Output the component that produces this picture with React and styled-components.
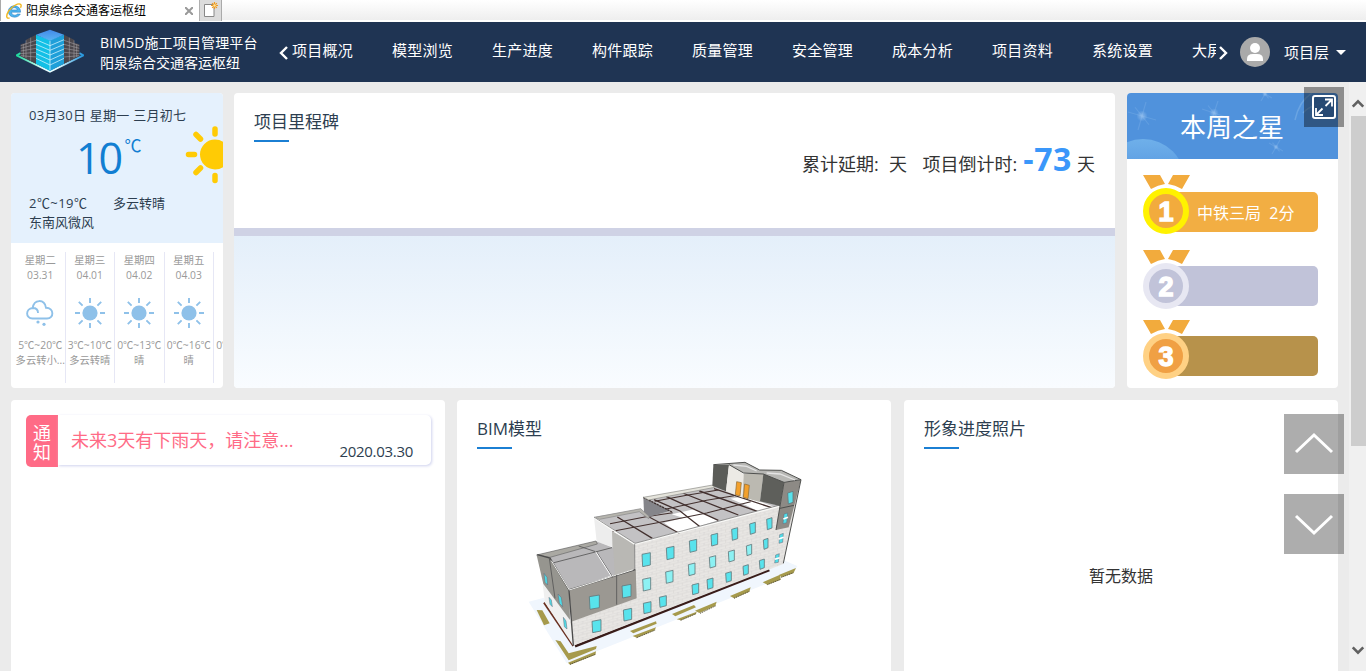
import React from 'react';
import styled, { createGlobalStyle } from 'styled-components';

const GlobalStyle = createGlobalStyle`
  * { box-sizing: border-box; }
  body {
    margin: 0;
    overflow: hidden;
    background: #ebebeb;
    color: #2d3e50;
    font-family: "Open Sans", "Noto Sans CJK SC", sans-serif;
  }
  svg { display: block; flex: none; }
`;

const Page = styled.div`
  width: 1366px;
  height: 671px;
  display: flex;
  flex-direction: column;
  overflow: hidden;
`;

/* Browser tab strip */
const TabStrip = styled.div`
  height: 22px;
  display: flex;
  flex: none;
  background: linear-gradient(#fff, #eee 92%, #fff 93%);
`;
const BrowserTab = styled.div`
  width: 200px;
  height: 21px;
  padding: 0 6px 0 5px;
  display: flex;
  align-items: center;
  background: #fff;
  border-left: 1px solid #aaa;
  border-right: 1px solid #b0b0b0;
  color: #000;
  font-size: 12px;
  line-height: 20px;
`;
const TabTitle = styled.span`
  flex: 1;
  margin-left: 4px;
  white-space: nowrap;
`;
const NewTab = styled.div`
  width: 22px;
  height: 21px;
  background: #dcdcdc;
  border-right: 1px solid #aaa;
`;

/* Header */
const Header = styled.header`
  height: 60px;
  flex: none;
  display: flex;
  align-items: center;
  background: #1f3453;
  color: #fff;
`;
const HeaderLogo = styled.div`
  width: 68px;
  margin-left: 16px;
`;
const Brand = styled.div`
  width: 178px;
  margin-left: 16px;
  font-size: 14px;
  line-height: 20px;
  white-space: nowrap;
  padding-top: 1px;
`;
const BrandName = styled.div`
  letter-spacing: 0.15px;
`;
const NavArrow = styled.div`
  width: 12px;
  margin-left: ${p => p.$gap || 0}px;
  display: flex;
  justify-content: center;
  padding-top: 1px;
`;
const Nav = styled.nav`
  width: 924px;
  height: 60px;
  margin-left: 2px;
  display: flex;
  gap: 39px;
  overflow: hidden;
  font-size: 15px;
  line-height: 57px;
  letter-spacing: 0.25px;
  white-space: nowrap;
`;
const NavItem = styled.a`
  flex: none;
  width: 61px;
`;
const UserMenu = styled.div`
  display: flex;
  align-items: center;
  margin-left: 11px;
  font-size: 15px;
  line-height: 20px;
`;
const UserLabel = styled.span`
  margin: 0 7px 0 14px;
`;

/* Page body */
const Body = styled.div`
  position: relative;
  flex: 1;
  min-height: 0;
  display: flex;
`;
const Board = styled.main`
  flex: 1;
  display: flex;
  flex-direction: column;
  gap: 12px;
  padding: 11px 11px 0;
`;
const TopRow = styled.div`
  height: 295px;
  flex: none;
  display: grid;
  grid-template-columns: 223px 893px 211px;
`;
const BottomRow = styled.div`
  flex: 1;
  display: grid;
  grid-template-columns: 446px 447px 434px;
`;
const Card = styled.section`
  overflow: hidden;
  margin-right: ${p => p.$gap || 0}px;
  background: #fff;
  border-radius: ${p => (p.$open ? '4px 4px 0 0' : '4px')};
  padding: ${p => p.$pad || '0'};
`;
const CardTitle = styled.h2`
  width: max-content;
  margin: 0;
  font-size: 17px;
  line-height: 24px;
  font-weight: 400;
  &::after {
    content: '';
    display: block;
    width: 35px;
    height: 2px;
    margin-top: 6px;
    background: #1b7fd3;
  }
`;

/* Weather */
const Today = styled.div`
  height: 150px;
  padding: 13px 0 0 18px;
  background: #e5f1fd;
  font-size: 13px;
  line-height: 19px;
  white-space: nowrap;
`;
const TodayDate = styled.div`
  letter-spacing: 0.25px;
`;
const TempRow = styled.div`
  display: flex;
  height: 69px;
  color: #117ed2;
`;
const Temp = styled.span`
  width: 47px;
  margin-left: 47px;
  padding-top: 2px;
  font-size: 43px;
  line-height: 62px;
  letter-spacing: -2px;
`;
const Degree = styled.span`
  width: 63px;
  padding: 11px 0 0 2px;
  font-size: 17px;
  line-height: 20px;
`;
const TodayRange = styled.div`
  display: flex;
`;
const RangeText = styled.span`
  width: 84px;
  letter-spacing: 0.45px;
`;
const Forecast = styled.div`
  height: 145px;
  display: flex;
  padding: 9px 0 5px 5px;
  overflow: hidden;
`;
const Day = styled.div`
  width: 49.5px;
  flex: none;
  display: flex;
  flex-direction: column;
  align-items: center;
  padding-top: 1px;
  border-right: 1px solid #e6e7f5;
  color: #999;
  font-size: 10.3px;
  line-height: 15px;
  white-space: nowrap;
  svg { margin: 14px 0 9px; }
`;

/* Milestones */
const MilestoneHead = styled.div`
  height: 135px;
  padding: 17px 20px 0;
`;
const Countdown = styled.div`
  display: flex;
  justify-content: flex-end;
  align-items: baseline;
  margin-top: -1px;
  color: #333;
  font-size: 18px;
  line-height: 36px;
  white-space: pre;
  word-spacing: 0.5px;
`;
const CountValue = styled.b`
  margin: 0 5px 0 6px;
  color: #3a97fa;
  font-size: 32px;
  letter-spacing: 0.6px;
`;
const MilestoneTrack = styled.div`
  height: 160px;
  border-top: 8px solid #cfd2e5;
  background: linear-gradient(#e4effa, #f9fcff);
`;

/* Weekly star */
const StarBanner = styled.div`
  display: grid;
  height: 66px;
  > * { grid-area: 1 / 1; }
`;
const StarTitle = styled.div`
  z-index: 1;
  text-align: center;
  color: #fff;
  font-size: 26px;
  line-height: 68px;
  padding-right: 1px;
`;
const Rank = styled.div`
  display: flex;
  align-items: flex-end;
  height: 59px;
  margin: ${p => p.$top}px 20px 0 16px;
`;
const RankBar = styled.div`
  flex: 1;
  height: 40px;
  margin: 0 0 ${p => p.$lift || 3}px -20px;
  padding-left: 27px;
  border-radius: 0 5px 5px 0;
  background: ${p => p.$color};
  color: #fff;
  font-size: 16px;
  line-height: 42px;
  white-space: pre;
`;
const MedalSvg = styled.svg`
  z-index: 1;
`;
const MedalNumber = styled.text`
  font-family: "Liberation Sans", Arial, sans-serif;
  font-weight: 700;
  font-size: 27px;
  text-anchor: middle;
  fill: #fff;
  stroke: #fff;
  stroke-width: 1.4px;
`;

/* Notice */
const Notice = styled.div`
  height: 52px;
  display: flex;
`;
const NoticeTag = styled.div`
  width: 32px;
  padding: 9px 7px 0;
  border-radius: 5px 0 0 5px;
  background: #ff6b86;
  color: #fff;
  font-size: 18px;
  line-height: 19px;
`;
const NoticeBody = styled.div`
  flex: 1;
  height: 50px;
  display: flex;
  padding: 0 18px 0 13px;
  border-radius: 0 5px 5px 0;
  box-shadow: 1px 1px 3px #cfd2ee;
  white-space: nowrap;
`;
const NoticeText = styled.span`
  flex: 1;
  color: #ff6b86;
  font-size: 18px;
  line-height: 50px;
`;
const NoticeDate = styled.span`
  font-size: 15px;
  line-height: 73px;
  letter-spacing: -0.3px;
`;
const ModelView = styled.div`
  margin: 1px 0 0 43px;
`;
const Empty = styled.div`
  margin-top: 115px;
  text-align: center;
  color: #333;
  font-size: 16px;
  line-height: 24px;
  padding-right: 20px;
`;

/* Scrollbar and floating controls */
const Scrollbar = styled.div`
  width: 17px;
  flex: none;
  display: flex;
  flex-direction: column;
  justify-content: space-between;
  align-items: center;
  background: #f0f0f0;
  padding: 15px 0 14px;
`;
const ScrollThumb = styled.div`
  width: 15px;
  height: 330px;
  margin: 5px 0 auto 1px;
  background: #cdcdcd;
`;
const FloatButton = styled.button`
  position: absolute;
  right: 22px;
  top: ${p => p.$top}px;
  width: ${p => p.$size}px;
  height: ${p => p.$size}px;
  display: grid;
  place-items: center;
  padding: 0;
  border: 0;
  background: ${p => p.$bg || 'rgba(0,0,0,0.32)'};
  z-index: 2;
`;

const IeIcon = () => (
  <svg width="16" height="16" viewBox="0 0 16 16" fill="none">
    <path d="M14.600 9.200H5.400C5.700 12.300 10 13 11.300 11H14.300C12.400 15.600 2.600 15.600 2.300 8.500C2.600 .8 14.800 .8 14.600 9.200ZM5.500 6.900H11.200C10.800 4 5.900 4 5.500 6.900Z" fill="#4db4ee" stroke="#2377bd" strokeWidth=".5" />
    <path d="M3.600 14.800C.2 16.300 -.2 12.600 2.600 8.200C5.800 3.300 12.600-.5 14.700 1.400C15.500 2.300 15 3.800 14.500 4.800" stroke="#f2b71d" strokeWidth="1.400" />
  </svg>
);

const NewTabIcon = () => (
  <svg width="21" height="21" viewBox="0 0 21 21">
    <path d="M4.500 4.500h9.500v12h-9.500z" fill="#fff" stroke="#888" />
    <g stroke="#f19a20" strokeWidth="1.200"><path d="M14.500 2v7M11 5.500h7M12.100 3.100l4.800 4.800M16.900 3.100l-4.800 4.800" /></g>
    <circle cx="14.500" cy="5.500" r="1.200" fill="#ffe79a" />
  </svg>
);

const Logo = () => (
  <svg width="68" height="46" viewBox="0 0 204 138">
    <defs>
      <linearGradient id="logoBase" x1="0" x2="1"><stop stopColor="#19d99b" /><stop offset=".4" stopColor="#e8fdff" /><stop offset=".6" stopColor="#e8fdff" /><stop offset="1" stopColor="#2395dc" /></linearGradient>
      <linearGradient id="logoTop" x1="0" y1="0" x2="0" y2="1"><stop stopColor="#4389e8" /><stop offset="1" stopColor="#58b4f5" /></linearGradient>
    </defs>
    <path d="M14 72L2 79L102 128L202 79L190 72" fill="none" stroke="url(#logoBase)" strokeWidth="6" strokeLinejoin="round" />
    <path d="M14 46L30 41V32L60 17V104L14 82zM190 46L174 41V32L144 17V104L190 82z" fill="#4b474c" />
    <g fill="none" stroke="#aaa7ac" strokeWidth="1.600">
      <path d="M14 50L60 34M14 58L60 46M14 66L60 58M14 74L60 70M14 80L60 84M22 46V84M30 34V88M44 26V95M190 50L144 34M190 58L144 46M190 66L144 58M190 74L144 70M190 80L144 84M182 46V84M174 34V88M160 26V95" />
    </g>
    <path d="M60 17L102 33V126L60 104z" fill="#12c0e6" />
    <path d="M102 33L144 17V104L102 126z" fill="#1e9fd9" />
    <path d="M60 17L102 2L144 17L102 35z" fill="url(#logoTop)" />
    <g fill="none" stroke="#dcf7ff" strokeWidth="2.200">
      <path d="M60 32l42 18 42-18M60 46l42 18 42-18M60 60l42 18 42-18M60 74l42 19 42-19M60 88l42 20 42-20M102 36v88" />
    </g>
  </svg>
);

const Chevron = ({ dir, size = 16, color = '#fff', w = 2.4 }) => {
  const d = { left: 'M11 2L5 8l6 6', right: 'M5 2l6 6-6 6', up: 'M2 11l6-6 6 6', down: 'M2 5l6 6 6-6' }[dir];
  return <svg width={size} height={size} viewBox="0 0 16 16" fill="none" stroke={color} strokeWidth={w}><path d={d} /></svg>;
};

const Avatar = () => (
  <svg width="30" height="30" viewBox="0 0 30 30">
    <circle cx="15" cy="15" r="15" fill="#aaa" />
    <circle cx="15" cy="11" r="5" fill="#fff" />
    <path d="M7 24v-2q0-5 6-5h4q6 0 6 5v2z" fill="#fff" />
  </svg>
);

const BigSun = () => (
  <svg width="38" height="60" viewBox="0 0 38 60">
    <circle cx="30" cy="29.500" r="15" fill="#ffcb05" />
    <g stroke="#ffcb05" strokeWidth="5.500" strokeLinecap="round"><path d="M30 4v5M30 50.500v5M3.500 29.500h6M11 9.500l4.500 4.500M11 47.500l4.500-4.500" /></g>
  </svg>
);

const Sun = () => (
  <svg width="32" height="32" viewBox="0 0 32 32">
    <circle cx="16" cy="16" r="7.600" fill="#8fc1e9" />
    <g stroke="#8fc1e9" strokeWidth="1.900"><path d="M16 1v5M16 26v5M1 16h5M26 16h5M4.800 4.800l3.800 3.800M23.400 23.400l3.800 3.800M27.200 4.800l-3.800 3.800M8.600 23.400l-3.800 3.800" /></g>
  </svg>
);

const Cloud = () => (
  <svg width="32" height="32" viewBox="0 0 32 32" fill="none" stroke="#8fc1e9" strokeWidth="1.900">
    <path d="M8.500 21.500C1.300 21.500 1.300 11.500 8.700 11C10 1.800 20.500 1.800 22 10.800C30.300 11 30.300 21.500 23 21.500zM8.700 11C12 11 14 13 14 16" />
    <circle cx="14" cy="25" r="1.600" fill="#8fc1e9" stroke="none" />
    <circle cx="20" cy="27.300" r="1.600" fill="#8fc1e9" stroke="none" />
  </svg>
);

const BannerArt = () => (
  <svg width="211" height="66" viewBox="0 0 211 66">
    <defs>
      <linearGradient id="globe" x1="0" y1="0" x2="0" y2=".5"><stop stopColor="#6fb0ea" /><stop offset="1" stopColor="#5495df" /></linearGradient>
      <radialGradient id="glow"><stop stopColor="#b6d6f7" stopOpacity=".6" /><stop offset="1" stopColor="#a6cdf5" stopOpacity="0" /></radialGradient>
    </defs>
    <rect width="211" height="66" fill="#5092dc" />
    <circle cx="16" cy="88" r="42" fill="url(#globe)" />
    {[[15, 23, 14], [87, 20, 12], [149, 54, 7], [138, 1, 7]].map(([x, y, r]) => (
      <g key={x}>
        <circle cx={x} cy={y} r={r / 2.5} fill="url(#glow)" />
        <path d={`M${x - r} ${y - 4}L${x + r} ${y + 4}M${x - 4} ${y + r}L${x + 4} ${y - r}M${x - r / 2} ${y - r / 1.6}L${x + r / 2} ${y + r / 1.6}`} stroke="#a6cdf5" strokeOpacity=".2" strokeWidth="1.200" />
      </g>
    ))}
    <path d="M168 27Q172 8 185 0M176 20Q184 10 211 8" fill="none" stroke="#9bc7ef" strokeOpacity=".35" strokeWidth="1.500" />
  </svg>
);

const Medal = ({ n, ring, fill }) => (
  <MedalSvg width="47" height="59" viewBox="0 0 47 59">
    <path d="M0 0H17L22 9Q15 10 8 14zM47 0H30L25 9Q32 10 39 14z" fill="#f2ab3d" />
    <circle cx="23" cy="36" r="20" fill={fill} stroke={ring} strokeWidth="6" />
    <MedalNumber x="23" y="45.500">{n}</MedalNumber>
  </MedalSvg>
);

const ExpandIcon = () => (
  <svg width="24" height="24" viewBox="0 0 24 24" fill="none" stroke="#fff" strokeWidth="2">
    <rect x="1" y="1" width="22" height="22" rx="2" fill="#24466f" fillOpacity=".8" />
    <path d="M13 4.500h7v7M20 4.500L13.500 11M4 13v7h7M4 20l6.500-6.500" strokeWidth="1.800" />
  </svg>
);

const WINDOWS = [
  [366, 308, 25, 40], [439, 289, 23, 38], [508, 268, 22, 37], [573, 250, 20, 36], [635, 233, 18, 36], [689, 217, 17, 34], [740, 203, 16, 34],
  [368, 383, 24, 38, 1], [437, 361, 22, 37, 1], [505, 339, 20, 36, 1], [568, 317, 19, 35, 1], [625, 300, 18, 34, 1], [679, 283, 16, 32, 1], [730, 265, 14, 31],
  [310, 475, 25, 36], [370, 455, 23, 34], [418, 437, 21, 33], [516, 400, 20, 32], [561, 384, 18, 32], [617, 365, 17, 30], [669, 344, 16, 30], [718, 327, 15, 29],
  [208, 435, 30, 41], [306, 403, 27, 39], [216, 509, 27, 37], [803, 124, 16, 36],
];
const PLANTERS = [
  'M330 543L408 514L410 521L340 550z', 'M338 558L408 532L404 541L350 563z',
  'M456 492L522 465L528 472L466 499z', 'M470 508L530 485L528 492L482 511z',
  'M525 482L590 455L586 467L538 489z', 'M630 438L692 412L688 425L642 445z',
  'M728 397L780 374L782 389L742 404z', 'M778 374L828 354L820 370L784 382z',
  'M50 480L67 481L89 520L72 526z', 'M106 570L122 574L146 610L230 588L228 597L146 631z', 'M144 638L228 604L226 614L150 644z',
];

const BuildingModel = () => (
  <svg width="300" height="215" viewBox="0 0 900 645">
    <defs>
      <pattern id="brick" width="26" height="16" patternUnits="userSpaceOnUse" patternTransform="skewY(-14)">
        <rect width="26" height="16" fill="#e8e6e3" />
        <path d="M0 0H26M0 8H26M6 0V8M19 8V16" stroke="#d3d1ce" strokeWidth="1.500" />
      </pattern>
      <linearGradient id="roof" x1="0" x2="1"><stop stopColor="#b3b2b4" /><stop offset="1" stopColor="#d0d0d2" /></linearGradient>
    </defs>
    <path d="M26 455L72 443L160 588L760 345L790 330L832 348L822 368L140 640z" fill="#f0f6fd" />
    <path d="M72 456L162 586L748 356L780 340L600 300z" fill="#fff" />
    <g fill="#a69a4c">{PLANTERS.map(d => <path key={d} d={d} />)}</g>
    <g fill="none" stroke="#5e583d" strokeWidth="3" strokeDasharray="4 2">
      <path d="M540 490L588 467M642 445L688 424M742 404L782 388M784 382L820 368M150 643L226 613M350 563L406 540M482 511L528 491" />
    </g>
    <path d="M165 589L748 360" stroke="#391c19" strokeWidth="8" />
    <path d="M72 458L160 588" stroke="#693021" strokeWidth="6" />

    <path d="M343 282L780 168L842 90L790 342L160 587L150 515L345 445z" fill="url(#brick)" />
    <path d="M68 402L148 505L160 587L75 458z" fill="#f0f0f0" />
    <path d="M222 202L280 245L280 292L230 275z" fill="#ededed" />
    <path d="M276 243L344 282L344 362L280 380z" fill="#b9b8b4" />

    <path d="M225 200L362 176L388 200L372 144L580 106L780 168L344 282z" fill="#c3c2c4" />
    <path d="M432 218L490 204L455 193L525 177L595 211L474 248zM632 146L676 138L762 170L715 184L678 166z" fill="#fff" />
    <g fill="none" stroke="#43312f" strokeWidth="4">
      <path d="M292 201L397 265M402 149L480 183L540 230M438 139L595 211M488 129L655 195M538 123L712 184M582 116L755 173" />
      <path d="M270 221L378 200L458 188M278 244L436 214L560 189L692 155M425 180L560 151L642 137M404 154L500 136L595 120" strokeWidth="3.200" />
      <path d="M386 200L478 250" strokeWidth="3.200" />
    </g>
    <path d="M370 142L450 182L388 200L372 187z" fill="#85858a" />
    <path d="M370 142L456 186" stroke="#3d302e" strokeWidth="4" strokeDasharray="7 2" />
    <path d="M370 142L578 105L584 112L386 150z" fill="#e5e4dc" stroke="#8a8a85" strokeWidth="2" />
    <path d="M224 202L362 176L388 200L386 206L358 185L238 208z" fill="#b6b5ae" stroke="#888" strokeWidth="2" />
    <path d="M224 204L344 282L780 168" fill="none" stroke="#fafaf8" strokeWidth="5" />
    <path d="M222 201L345 280L780 165M344 282L345 445" fill="none" stroke="#666" strokeWidth="2" />

    <path d="M50 316L228 274L280 293L285 373L148 420L88 324z" fill="#b9b8ba" />
    <path d="M280 292L344 362L285 378z" fill="#b9b8b4" />
    <path d="M50 316L88 323L148 420L150 510L70 402z" fill="#96958f" />
    <path d="M148 420L347 359L350 445L154 515z" fill="#9b9892" />
    <path d="M50 315L228 273L232 282L90 322z" fill="#aaa9a3" stroke="#666" strokeWidth="2" />
    <path d="M52 314L90 324L147 420L346 359M160 587L147 420" fill="none" stroke="#4b4b4b" strokeWidth="4" />
    <path d="M94 332L148 420L340 359" fill="none" stroke="#f0f0ed" strokeWidth="3" />
    <path d="M102 338L276 293M176 288L230 306L278 382M290 375V464M88 325L105 445" fill="none" stroke="#555" strokeWidth="2.500" />
    <path d="M227 305L274 379" stroke="#fff" strokeWidth="3" />

    <path d="M580 45L675 37L720 60L784 61L842 89L790 96L730 75L670 70L627 45z" fill="#b7b7b4" />
    <path d="M580 45L627 44L618 124L577 107z" fill="#5b5c58" />
    <path d="M627 44L671 72L668 143L618 124z" fill="#eceae5" />
    <path d="M671 72L730 72L720 156L668 142z" fill="#bbb9b1" />
    <path d="M730 72L792 97L780 168L720 154z" fill="#5e5f5b" />
    <path d="M792 97L843 89L806 232L768 240z" fill="#8d8a85" />
    <path d="M580 44L675 37L719 60L784 61L843 89L792 97L730 72L671 69L627 44M792 97L768 240M780 175L822 166M843 89L790 340" fill="none" stroke="#4f504e" strokeWidth="3" />
    <path d="M640 45L680 49L710 63M740 69L780 72L825 90" fill="none" stroke="#e4e4e4" strokeWidth="4" />
    <path d="M650 95L664 98L660 138L646 134zM674 102L688 106L684 146L670 142z" fill="#f3a02c" stroke="#8d672e" strokeWidth="2" />

    {WINDOWS.map(([x, y, w, h, pale]) => (
      <path key={`${x}-${y}`} d={`M${x} ${y + 5}L${x + w} ${y}L${x + w} ${y + h - 3}L${x + 2} ${y + h + 2}z`} fill={pale ? '#8cf1f3' : '#58e3ed'} stroke="#63787c" strokeWidth="2.500" />
    ))}
    <g fill="#4fdde8" stroke="#667" strokeWidth="1.500">
      <path d="M72 370L81 382L83 405L75 397zM114 432L124 443L128 470L118 460zM87 442L94 450L97 470L90 463zM130 502L138 513L141 537L133 530zM792 192L803 189L800 218L789 221zM779 254L790 250L788 277L777 280zM767 315L778 311L775 337L764 339z" />
    </g>
    <path d="M790 207L804 202M776 267L791 262M764 328L779 323" stroke="#fff" strokeWidth="5" />
  </svg>
);

const NAV = ['项目概况', '模型浏览', '生产进度', '构件跟踪', '质量管理', '安全管理', '成本分析', '项目资料', '系统设置', '大屏'];
const DAYS = [
  { day: '星期二', date: '03.31', range: '5℃~20℃', text: '多云转小...', cloud: true },
  { day: '星期三', date: '04.01', range: '3℃~10℃', text: '多云转晴' },
  { day: '星期四', date: '04.02', range: '0℃~13℃', text: '晴' },
  { day: '星期五', date: '04.03', range: '0℃~16℃', text: '晴' },
  { day: '', date: '', range: '0℃~16℃', text: '' },
];

export default function App() {
  return (
    <Page>
      <GlobalStyle />
      <TabStrip>
        <BrowserTab>
          <IeIcon />
          <TabTitle>阳泉综合交通客运枢纽</TabTitle>
          <svg width="8" height="8" viewBox="0 0 8 8" stroke="#999" strokeWidth="2"><path d="M0 0l8 8M8 0L0 8" /></svg>
        </BrowserTab>
        <NewTab><NewTabIcon /></NewTab>
      </TabStrip>

      <Header>
        <HeaderLogo><Logo /></HeaderLogo>
        <Brand>
          <BrandName>BIM5D施工项目管理平台</BrandName>
          <div>阳泉综合交通客运枢纽</div>
        </Brand>
        <NavArrow><Chevron dir="left" /></NavArrow>
        <Nav>{NAV.map(item => <NavItem key={item}>{item}</NavItem>)}</Nav>
        <NavArrow $gap={1}><Chevron dir="right" /></NavArrow>
        <UserMenu>
          <Avatar />
          <UserLabel>项目层</UserLabel>
          <svg width="10" height="5" viewBox="0 0 10 5"><path d="M0 0h10L5 5z" fill="#fff" /></svg>
        </UserMenu>
      </Header>

      <Body>
        <Board>
          <TopRow>
            <Card $gap={11}>
              <Today>
                <TodayDate>03月30日 星期一 三月初七</TodayDate>
                <TempRow>
                  <Temp>10</Temp>
                  <Degree>℃</Degree>
                  <BigSun />
                </TempRow>
                <TodayRange><RangeText>2℃~19℃</RangeText><span>多云转晴</span></TodayRange>
                <div>东南风微风</div>
              </Today>
              <Forecast>
                {DAYS.map((d, i) => (
                  <Day key={i}>
                    <span>{d.day || '\u00a0'}</span>
                    <span>{d.date || '\u00a0'}</span>
                    {d.cloud ? <Cloud /> : <Sun />}
                    <span>{d.range}</span>
                    <span>{d.text}</span>
                  </Day>
                ))}
              </Forecast>
            </Card>
            <Card $gap={12}>
              <MilestoneHead>
                <CardTitle>项目里程碑</CardTitle>
                <Countdown>
                  <span>累计延期:  天</span>
                  <span>{'   '}项目倒计时:</span>
                  <CountValue>-73</CountValue>
                  <span>天</span>
                </Countdown>
              </MilestoneHead>
              <MilestoneTrack />
            </Card>
            <Card>
              <StarBanner>
                <BannerArt />
                <StarTitle>本周之星</StarTitle>
              </StarBanner>
              <Rank $top={16}><Medal n="1" ring="#fff200" fill="#f2ab3d" /><RankBar $color="#f2ae43" $lift={2}>中铁三局  2分</RankBar></Rank>
              <Rank $top={16}><Medal n="2" ring="#e7e7f2" fill="#c1c3d9" /><RankBar $color="#c1c3d9" /></Rank>
              <Rank $top={11}><Medal n="3" ring="#ffd184" fill="#f0a044" /><RankBar $color="#b7924b" /></Rank>
            </Card>
          </TopRow>
          <BottomRow>
            <Card $open $gap={12} $pad="15px 14px 0 15px">
              <Notice>
                <NoticeTag>通知</NoticeTag>
                <NoticeBody>
                  <NoticeText>未来3天有下雨天，请注意...</NoticeText>
                  <NoticeDate>2020.03.30</NoticeDate>
                </NoticeBody>
              </Notice>
            </Card>
            <Card $open $gap={13} $pad="17px 20px 0">
              <CardTitle>BIM模型</CardTitle>
              <ModelView><BuildingModel /></ModelView>
            </Card>
            <Card $open $pad="17px 0 0 20px">
              <CardTitle>形象进度照片</CardTitle>
              <Empty>暂无数据</Empty>
            </Card>
          </BottomRow>
        </Board>
        <Scrollbar>
          <Chevron dir="up" size={14} color="#606060" w={3} />
          <ScrollThumb />
          <Chevron dir="down" size={14} color="#606060" w={3} />
        </Scrollbar>
        <FloatButton $top={5} $size={40} $bg="rgba(0,0,0,0.4)"><ExpandIcon /></FloatButton>
        <FloatButton $top={332} $size={60}>
          <svg width="40" height="24" viewBox="0 0 40 24" fill="none" stroke="#fff" strokeWidth="3"><path d="M2 20L20 3l18 17" /></svg>
        </FloatButton>
        <FloatButton $top={412} $size={60}>
          <svg width="40" height="24" viewBox="0 0 40 24" fill="none" stroke="#fff" strokeWidth="3"><path d="M2 4l18 17L38 4" /></svg>
        </FloatButton>
      </Body>
    </Page>
  );
}
